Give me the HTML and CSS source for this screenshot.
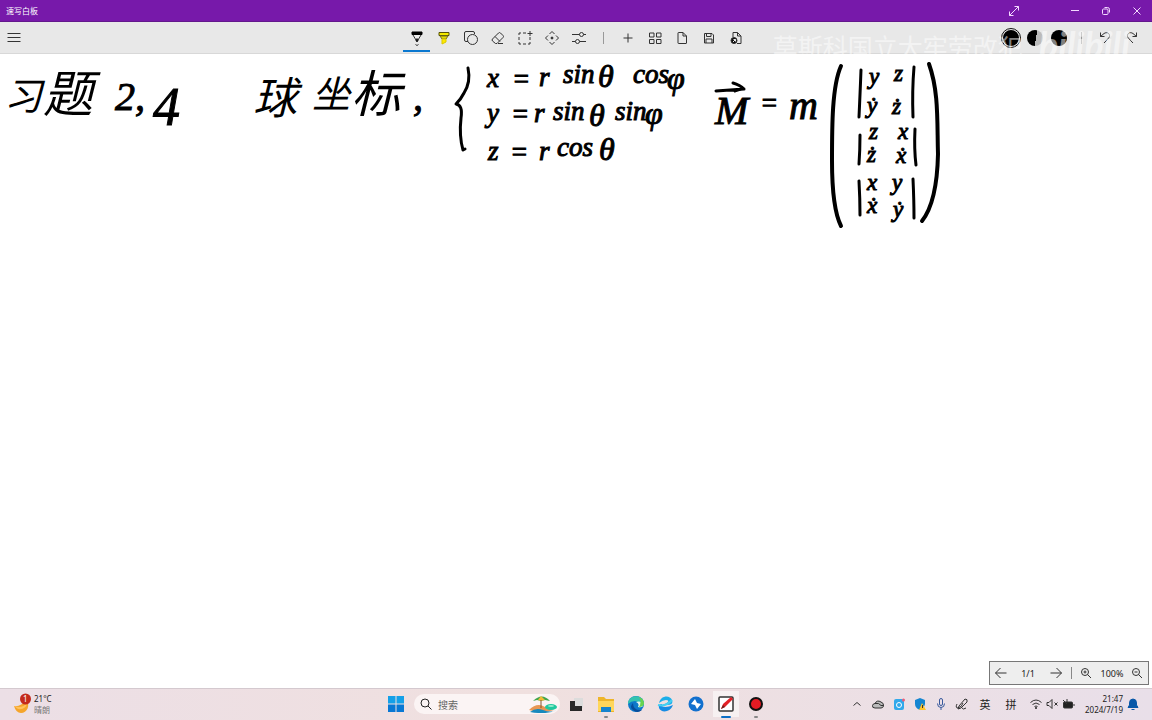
FILE: index.html
```html
<!DOCTYPE html>
<html lang="zh-CN">
<head>
<meta charset="utf-8">
<title>速写白板</title>
<link rel="stylesheet" href="styles.css">
</head>
<body>
<div class="app">
  <header class="titlebar">
    <span class="title">速写白板</span>
    <button class="win expand" aria-label="全屏"><svg width="12" height="12" viewBox="0 0 12 12"><path d="M1.500 10.500 10.500 1.500M6.500 1.500h4v4M1.500 6.500v4h4"/></svg></button>
    <button class="win" aria-label="最小化"><svg width="12" height="12" viewBox="0 0 12 12"><path d="M2 5.500h8"/></svg></button>
    <button class="win" aria-label="还原"><svg width="12" height="12" viewBox="0 0 12 12"><rect x="2.500" y="4" width="5.500" height="5.500" rx="1"/><path d="M4.500 2.500h3q2 0 2 2v3"/></svg></button>
    <button class="win" aria-label="关闭"><svg width="12" height="12" viewBox="0 0 12 12"><path d="m2.500 2.500 7 7m0-7-7 7"/></svg></button>
  </header>

  <div class="toolbar">
    <div class="side">
      <button class="tool" aria-label="菜单"><svg width="16" height="16" viewBox="0 0 16 16"><path d="M1.500 3.500h13M1.500 7.500h13M1.500 11.500h13"/></svg></button>
    </div>
    <div class="tools">
      <button class="tool active" aria-label="钢笔"><svg width="16" height="16" viewBox="0 0 16 16"><path d="M3 2h10v2.500H3z" fill="#000" stroke="#000"/><path d="m4 5 3 5h2l3-5" fill="#eee"/><path d="M7 9h2v2l-1 1-1-1z" fill="#000"/><path d="m6.500 14.500 1.500 1 1.500-1"/></svg></button>
      <button class="tool" aria-label="荧光笔"><svg width="16" height="16" viewBox="0 0 16 16"><path d="M3 2.500h10v3H3z" fill="#f4e900" stroke="#55500b"/><path d="m4 6 2 3h4l2-3z" fill="#e2d900" stroke="#77701d"/><path d="M6 9h4v3l-4 2z" fill="#ffe900" stroke="#d9c900"/></svg></button>
      <button class="tool" aria-label="形状"><svg width="16" height="16" viewBox="0 0 16 16"><path d="M5 11.500H3q-1.500 0-1.500-1.500V3q0-1.500 1.500-1.500h7q1.500 0 1.500 1.500v1"/><circle cx="9.500" cy="9.500" r="5"/></svg></button>
      <button class="tool" aria-label="橡皮"><svg width="16" height="16" viewBox="0 0 16 16"><path d="m2.500 9 6-6q1-1 2 0l2.500 2.500q1 1 0 2l-6 6H5.500L2.500 11q-1-1 0-2zM5 6.500l5 5M8 13.500h5"/></svg></button>
      <button class="tool" aria-label="选择"><svg width="16" height="16" viewBox="0 0 16 16"><path d="M2 5V3h2m2 0h3M2 7v3m0 2v2h2m2 0h3m2 0h2v-2m0-2V7"/><path d="M13 1v5M10.500 3.500h5"/></svg></button>
      <button class="tool" aria-label="移动"><svg width="16" height="16" viewBox="0 0 16 16"><path d="m5.500 4 2.500-2.500L10.500 4M4 5.500 1.500 8 4 10.500M12 5.500 14.500 8 12 10.500M5.500 12 8 14.500l2.500-2.500"/><circle cx="8" cy="8" r="1" fill="#222"/></svg></button>
      <button class="tool" aria-label="设置"><svg width="16" height="16" viewBox="0 0 16 16"><path d="M1 4.500h7.500m4 0H15M1 11.500h3.500m4 0H15"/><circle cx="10.500" cy="4.500" r="2"/><circle cx="6.500" cy="11.500" r="2"/></svg></button>
      <span class="sep"></span>
      <button class="tool" aria-label="添加"><svg width="16" height="16" viewBox="0 0 16 16"><path d="M8 3.500v9M3.500 8h9"/></svg></button>
      <button class="tool" aria-label="页面"><svg width="16" height="16" viewBox="0 0 16 16"><path d="M2.500 3h4.500v4H2.500zM9.500 3H14v4H9.500zM2.500 9.500h4.500v4H2.500zM9.500 9.500H14v4H9.500z"/></svg></button>
      <button class="tool" aria-label="新建"><svg width="16" height="16" viewBox="0 0 16 16"><path d="M4 3q0-.5.500-.5H9L12.500 6v7q0 .5-.5.500H4.500Q4 13.500 4 13zM9 2.500V6h3.500"/></svg></button>
      <button class="tool" aria-label="保存"><svg width="16" height="16" viewBox="0 0 16 16"><path d="M3.500 3.500H11L12.500 5v8h-9zM5.500 3.500v3h4.500v-3M5 13V9h6v4"/></svg></button>
      <button class="tool" aria-label="导出"><svg width="16" height="16" viewBox="0 0 16 16"><path d="M5 7V2.500h4.500L13 6v7.500H9M9.500 2.500V6H13"/><circle cx="6" cy="10.500" r="3" fill="#111"/><path d="m5 12 2.500-2.500M5.500 9.500h2v2" stroke="#eee"/></svg></button>
    </div>
    <div class="side right">
      <button class="pen selected" aria-label="笔 1"><span class="ink"></span></button>
      <button class="pen" aria-label="笔 2"><span class="ink half"></span></button>
      <button class="pen" aria-label="笔 3"><span class="ink"></span></button>
      <span class="sep"></span>
      <button class="tool" aria-label="撤销"><svg width="16" height="16" viewBox="0 0 16 16"><path d="M3.500 2.500v4h4M3.500 6.500 7 3.500c3-2 6 0 5.500 3Q12 8 7 13"/></svg></button>
      <button class="tool" aria-label="重做"><svg width="16" height="16" viewBox="0 0 16 16"><path d="M12.500 2.500v4h-4M12.500 6.500 9 3.500c-3-2-6 0-5.500 3Q4 8 9 13"/></svg></button>
    </div>
    <div class="watermark"><span>莫斯科国立大牢劳改犯</span><b>bilibili</b></div>
  </div>

  <main class="board">
    <svg class="page" role="img" aria-label="习题 2,4 球坐标">
      <g class="hanzi">
        <text class="narrow" x="4" y="56">习</text><text class="wide" x="43" y="58">题</text>
        <text x="253" y="60">球</text><text class="narrow" x="312" y="54">坐</text><text class="wide" x="351" y="58">标</text>
      </g>
      <g class="digits"><text x="115" y="56">2</text><text x="135" y="56">,</text><text class="tall" x="153" y="71">4</text><text x="413" y="56">,</text></g>
      <g class="math">
        <text x="487" y="33">x</text><text x="512" y="34">=</text><text x="539" y="32">r</text><text x="563" y="29">sin</text><text class="theta" x="598" y="33">θ</text><text x="633" y="29">cos</text><text class="phi" x="667" y="35">φ</text>
        <text x="487" y="68">y</text><text x="511" y="69">=</text><text x="534" y="68">r</text><text x="553" y="66">sin</text><text class="theta" x="589" y="72">θ</text><text x="615" y="66">sin</text><text class="phi" x="645" y="70">φ</text>
        <text x="488" y="106">z</text><text x="510" y="107">=</text><text x="539" y="106">r</text><text x="557" y="102">cos</text><text class="theta" x="599" y="106">θ</text>
        <text class="big" x="715" y="70">M</text><text x="760" y="58">=</text><text class="big" x="789" y="65">m</text>
      </g>
      <g class="entry">
        <text x="869" y="30">y</text><text x="894" y="27">z</text>
        <text x="867" y="59">ẏ</text><text x="892" y="60">ż</text>
        <text x="869" y="85">z</text><text x="898" y="85">x</text>
        <text x="867" y="108">ż</text><text x="896" y="109">ẋ</text>
        <text x="867" y="136">x</text><text x="892" y="136">y</text>
        <text x="867" y="159">ẋ</text><text x="893" y="163">ẏ</text>
      </g>
      <g class="stroke">
        <path d="M468 14q3 14-4 25-3 6-8 11 7 1 5 14-2 18 2 32l2-1"/>
        <path d="M716 37 744 35m-11-6q7 2 11 6-5 0-9 2"/>
        <path class="heavy" d="M841 12c-9 20-9 60-9 95q0 47 9 65"/>
        <path class="heavy" d="M929 10c10 28 8 58 9 90q-1 48-16 67"/>
        <path d="M861 16q-1 26-2 47M914 13q-2 24-1 50M860 81q0 15-1 29M915 75q-1 20 1 36M859 127q1 18 1 34M913 125q1 22 1 39"/>
      </g>
    </svg>
    <nav class="pager">
      <button aria-label="上一页"><svg width="14" height="14" viewBox="0 0 14 14"><path d="M12.500 7h-11m5-5-5 5 5 5"/></svg></button>
      <span class="num">1/1</span>
      <button aria-label="下一页"><svg width="14" height="14" viewBox="0 0 14 14"><path d="M1.500 7h11m-5-5 5 5-5 5"/></svg></button>
      <span class="bar"></span>
      <button aria-label="放大"><svg width="14" height="14" viewBox="0 0 14 14"><circle cx="6" cy="6" r="3.500"/><path d="m8.500 8.500 3.500 3.500M4.500 6h3M6 4.500v3"/></svg></button>
      <span class="num">100%</span>
      <button aria-label="缩小"><svg width="14" height="14" viewBox="0 0 14 14"><circle cx="6" cy="6" r="3.500"/><path d="m8.500 8.500 3.500 3.500M4.500 6h3"/></svg></button>
    </nav>
  </main>

  <footer class="taskbar">
    <button class="weather">
      <svg width="20" height="24" viewBox="0 0 20 24"><path d="M2 14q7 1 12-6c5 5 1 13-5 13q-5 0-7-7z" fill="#f5a52c"/><path d="M2 14q8 3 13-3-1 7-9 6z" fill="#ffc35c"/><circle cx="13.500" cy="7" r="5.500" fill="#c42b1c"/><text class="badge" x="11" y="10">1</text></svg>
      <span class="temp"><span>21°C</span><span class="sky">晴朗</span></span>
    </button>
    <div class="dock">
      <button class="item" aria-label="开始"><svg width="18" height="18" viewBox="0 0 18 18"><path fill="#14a0e8" d="M1 1h7.500v7.500H1zM9.500 1H17v7.500H9.500z"/><path fill="#0878d4" d="M1 9.500h7.500V17H1zM9.500 9.500H17V17H9.500z"/></svg></button>
      <label class="search"><svg width="14" height="14" viewBox="0 0 14 14"><circle cx="6" cy="6" r="4"/><path d="m9 9 3.500 3.500"/></svg><input type="text" placeholder="搜索" aria-label="搜索">
        <svg class="beach" width="30" height="18" viewBox="0 0 30 18"><path d="M1 15q8-8 16-3l9 3q-12 4-25 0z" fill="#e79754"/><path d="M2 17q6-5 13-2 8 3 14 0-10 5-27 2z" fill="#1789bd"/><path d="M5 6q9-9 17 0l-5-1-4 1-4-1z" fill="#43a64f"/><path d="m10 5 3-4 4 4-4 1z" fill="#f3bb37"/><path d="M13 5v8" stroke="#88572e"/><ellipse cx="23" cy="12" rx="6" ry="3" fill="#20c8a0"/><ellipse cx="23" cy="11" rx="3" ry="1" fill="#8eecc8"/></svg></label>
      <button class="item" aria-label="任务视图"><svg width="18" height="18" viewBox="0 0 18 18"><path d="M7 3h9v10H7z" fill="#dcdcdc"/><path d="M3 6h5v5h7v5H3z" fill="#282828"/></svg></button>
      <button class="item open" aria-label="文件资源管理器"><svg width="18" height="18" viewBox="0 0 18 18"><path d="M1 2h6l2 2h8v13H1z" fill="#eeb52a"/><path d="M1 6h16v10H1z" fill="#ffd65b"/><path d="M4 12h10v5H4z" fill="#1684ce"/></svg></button>
      <button class="item" aria-label="Edge"><svg width="18" height="18" viewBox="0 0 18 18"><circle cx="9" cy="9" r="8" fill="#0c78ca"/><path d="M1 9C1-1 16-1 17 8q0 5-6 4 2-5-3-6-4 0-7 3z" fill="#33c3b0"/><path d="M6 8q0 8 9 7-5 4-9 0-4-3 0-7z" fill="#074d9b"/><path d="M9 7q4 2 2 5 3 1 5-1-1-6-7-4z" fill="#e8f3ee"/><path d="M12 2q5 2 5 7-1 3-5 3 3-5 0-10z" fill="#68d34e"/></svg></button>
      <button class="item" aria-label="浏览器"><svg width="18" height="18" viewBox="0 0 18 18"><path d="M2 8C4 0 13 0 15 5q2 5-5 5H5q4-1 6-3 1-2-2-2-3 0-7 3z" fill="#1daee9"/><path d="M16 10c-3 8-12 8-14 3q-1-4 3-4-1 3 3 3 4 0 8-2z" fill="#168be4"/><path d="M1 10q8 2 14-5" fill="none" stroke="#45cff2" stroke-width="2"/></svg></button>
      <button class="item" aria-label="闪电"><svg width="18" height="18" viewBox="0 0 18 18"><circle cx="9" cy="9" r="7.500" fill="#1270ce"/><path d="m8 4-4 5 4 1 2 4 4-5-4-1z" fill="#fff"/></svg></button>
      <button class="item open current" aria-label="速写白板"><svg width="18" height="18" viewBox="0 0 18 18"><rect x="2" y="2" width="14" height="14" rx="1" fill="#fff" stroke="#333" stroke-width="1.500"/><path d="m4 14 2-5 8-7 2 2-8 8z" fill="#e32026"/><path d="m4 14 2-4 2 2z" fill="#6d211d"/></svg></button>
      <button class="item open" aria-label="录制"><svg width="18" height="18" viewBox="0 0 18 18"><circle cx="9" cy="9" r="6" fill="#e31b23" stroke="#111" stroke-width="2"/></svg></button>
    </div>
    <div class="tray">
      <button aria-label="显示隐藏的图标"><svg width="14" height="14" viewBox="0 0 14 14"><path d="m3.500 8.500 3.500-3 3.500 3"/></svg></button>
      <button aria-label="云盘"><svg width="14" height="14" viewBox="0 0 14 14"><path d="M4 11q-3 0-2.500-2.500Q2 6.500 4 6.500q2-4 6-1.500 3 1 2.500 4-.5 2-2.500 2z" fill="#bbb"/><path d="M4 6.500q4-1 6 2h2"/></svg></button>
      <button aria-label="同步"><svg width="14" height="14" viewBox="0 0 14 14"><rect x="2" y="2" width="10" height="11" rx="2" fill="#31a9eb" stroke="none"/><circle cx="7" cy="8" r="2.500" stroke="#fff"/><circle cx="11.500" cy="3" r="1.500" fill="#ea5d77" stroke="none"/></svg></button>
      <button aria-label="安全"><svg width="14" height="14" viewBox="0 0 14 14"><path d="m2 3 5-2 5 2v4q-1 5-5 6-5-2-5-6z" fill="#1586d1" stroke="none"/><path d="m9 6 4 7H6z" fill="#ffc52d" stroke="none"/><path d="M9.500 8v3" stroke="#333"/></svg></button>
      <button aria-label="麦克风"><svg width="14" height="14" viewBox="0 0 14 14"><g stroke="#385a9d"><rect x="5.500" y="1.500" width="3" height="7" rx="1.500"/><path d="M3.500 6.500q0 4 3.500 4t3.500-4M7 10.500V13"/></g></svg></button>
      <button aria-label="笔"><svg width="14" height="14" viewBox="0 0 14 14"><path d="m4 9 6-7q3 0 2 3L6 11l-3 1zM2 7q-2 4 1 4 4-1 5-5M7 11q1 2 4 0"/></svg></button>
      <button class="ime">英</button>
      <button class="ime">拼</button>
      <button class="status" aria-label="网络、音量和电池"><svg width="14" height="14" viewBox="0 0 14 14"><path d="M1.500 5.500q5.500-5 11 0M3.500 7.500q3.500-3 7 0M5.500 9.500q1.500-1 3 0"/><circle cx="7" cy="11" r="1" fill="#222" stroke="none"/></svg><svg width="14" height="14" viewBox="0 0 14 14"><path d="M2 5.500h2l3-3v9l-3-3H2zM9.500 5.500l3 3m0-3-3 3"/></svg><svg width="14" height="14" viewBox="0 0 14 14"><rect x="2.500" y="5" width="9" height="6" rx="1" fill="#222"/><path d="M13 7v2M2 3l4 4m0-5v3"/></svg></button>
      <button class="clock"><span>21:47</span><span>2024/7/19</span></button>
      <button aria-label="通知"><svg width="14" height="14" viewBox="0 0 14 14"><path d="M2 10.500 3.500 8V6q0-4 3.500-4t3.500 4v2l1.500 2.500z" fill="#0757a8" stroke="#0757a8"/><path d="M5.500 12.500h3" stroke="#0757a8"/></svg></button>
    </div>
  </footer>
</div>
</body>
</html>
```

FILE: styles.css
```css
* { box-sizing: border-box; }
body { margin: 0; font-family: "Noto Sans", "Noto Sans CJK SC", sans-serif; color: #222; }
button { border: 0; padding: 0; background: none; font: inherit; color: inherit; display: flex; align-items: center; justify-content: center; }
svg { flex: none; }
.app { display: flex; flex-direction: column; height: 100vh; background: #fff; overflow: hidden; }

.titlebar { display: flex; flex: none; height: 22px; background: #7719aa; border-bottom: 1px solid #63188c; color: #fff; }
.title { flex: 1; padding-left: 6px; font-size: 8px; line-height: 22px; }
.win { width: 31px; }
.win svg { fill: none; stroke: #f3d9ff; }
.expand { margin-right: 30px; }

.toolbar { position: relative; display: grid; grid-template-columns: 1fr auto 1fr; flex: none; height: 32px; background: #e8e8e8; border-bottom: 1px solid #d8d8d8; }
.side, .tools { display: flex; align-items: center; }
.right { justify-content: flex-end; padding-right: 7px; }
.tool { width: 27px; height: 29px; }
.tool svg { fill: none; stroke: #333; }
.active { border-bottom: 2px solid #0b78d0; padding-top: 2px; }
.sep { width: 22px; height: 12px; background: linear-gradient(#999, #999) center / 1px 100% no-repeat; }
.right .sep { width: 20px; }
.pen { width: 24px; height: 24px; }
.ink { width: 16px; height: 16px; border-radius: 50%; background: #000; }
.half { background: linear-gradient(100deg, #000 55%, #bbb 55%); }
.selected .ink { outline: 1px solid #111; outline-offset: 1px; }
.watermark { position: absolute; z-index: 1; right: 22px; top: 0; display: flex; align-items: center; gap: 16px; height: 44px; color: #fff; opacity: .5; white-space: nowrap; pointer-events: none; }
.watermark span { font-size: 25px; line-height: 32px; padding-top: 6px; }
.watermark b { font: italic bold 36px/40px Lato, sans-serif; }

.board { position: relative; flex: 1; min-height: 0; }
.page { display: block; width: 100%; height: 100%; }
.hanzi { font: italic 44px "Noto Sans CJK SC", sans-serif; }
.hanzi .narrow { font-size: 38px; }
.hanzi .wide { font-size: 50px; }
.digits { font: italic 40px "Liberation Serif", serif; stroke: #000; stroke-width: 1px; }
.digits .tall { font-size: 54px; }
.math { font: italic 27px "Liberation Serif", serif; stroke: #000; stroke-width: 1px; }
.math .big { font-size: 40px; }
.math .theta { font-size: 32px; }
.math .phi { font-size: 32px; }
.entry { font: italic 23px "Liberation Serif", serif; stroke: #000; stroke-width: 1px; }
.stroke { fill: none; stroke: #000; stroke-width: 3px; stroke-linecap: round; stroke-linejoin: round; }
.stroke .heavy { stroke-width: 4px; }

.pager { position: absolute; right: 3px; bottom: 3px; display: grid; grid-template-columns: 22px 32px 24px 6px 24px 28px 22px; align-items: center; justify-items: center; height: 24px; border: 1px solid #777; background: #eee; }
.pager svg { fill: none; stroke: #333; }
.num { font-size: 9px; }
.bar { width: 1px; height: 12px; background: #888; }

.taskbar { display: grid; grid-template-columns: 1fr auto 1fr; flex: none; height: 32px; padding-bottom: 1px; background: linear-gradient(90deg, #ecdfe6, #f0e0df 45%, #e9dfe9); border-top: 1px solid #d4c9cf; }
.weather { justify-self: start; gap: 2px; padding-left: 12px; font-size: 8px; line-height: 11px; }
.badge { font-size: 8px; fill: #fff; }
.temp { display: flex; flex-direction: column; align-items: flex-start; }
.sky { color: #777; }
.dock { display: flex; align-items: center; }
.item { position: relative; width: 30px; height: 30px; }
.open::after { content: ""; position: absolute; bottom: 1px; left: 13px; width: 4px; height: 2px; border-radius: 1px; background: #888; }
.current { background: radial-gradient(#fff8, #fff8) center / 26px 26px no-repeat; }
.current::after { left: 10px; width: 10px; background: #0b6ec5; }
.search { display: flex; align-items: center; width: 146px; height: 20px; margin: 0 1px 0 3px; padding: 0 2px 0 5px; border-radius: 10px; background: #fbf4f4; }
.search svg { fill: none; stroke: #222; }
.search .beach { stroke: none; }
.search input { flex: 1; min-width: 0; padding: 0 0 0 5px; border: 0; background: none; font: 10px "Noto Sans CJK SC", sans-serif; }
.search input::placeholder { color: #666; }
.tray { display: flex; align-items: center; justify-content: flex-end; padding-right: 12px; }
.tray button { min-width: 14px; height: 30px; margin-right: 7px; }
.tray svg { fill: none; stroke: #333; }
.tray .ime { width: 18px; margin-right: 8px; font-size: 11px; }
.tray .status { gap: 2px; margin: 0 0 0 1px; }
.tray .clock { flex-direction: column; align-items: flex-end; margin: 0 3px 0 0; width: 48px; font-size: 8px; line-height: 11px; }
.tray button:last-child { margin-right: 0; }
```
